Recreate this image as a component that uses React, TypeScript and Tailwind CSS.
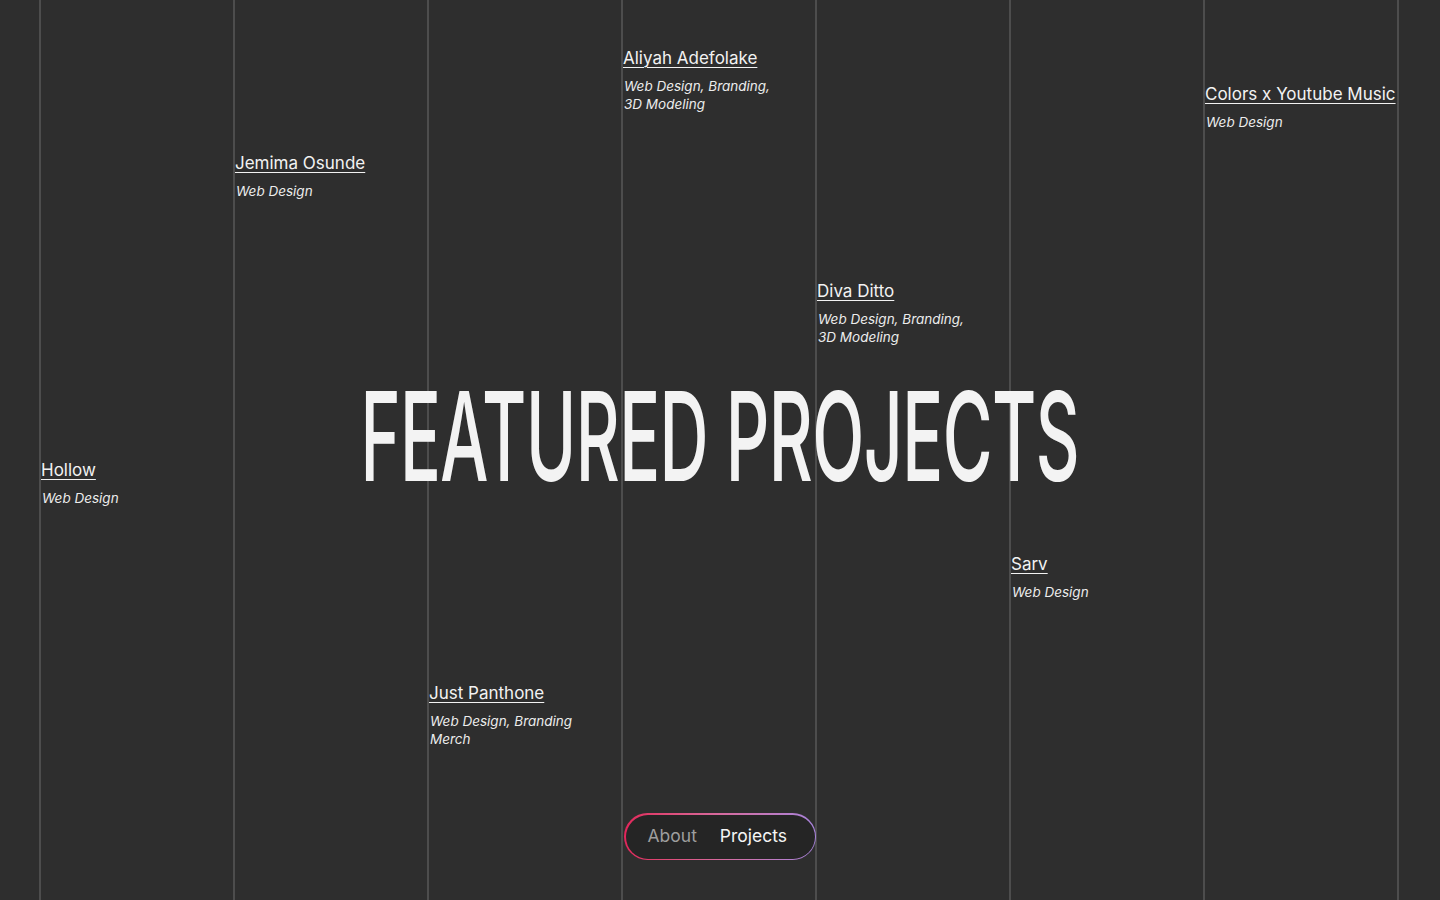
import React from 'react'

interface Project {
  name: string
  tags: string[]
  offset: string
}

const projects: Project[] = [
  { name: 'Hollow', tags: ['Web Design'], offset: 'pt-[458px]' },
  { name: 'Jemima Osunde', tags: ['Web Design'], offset: 'pt-[151px]' },
  { name: 'Just Panthone', tags: ['Web Design, Branding', 'Merch'], offset: 'pt-[681px]' },
  { name: 'Aliyah Adefolake', tags: ['Web Design, Branding,', '3D Modeling'], offset: 'pt-[46px]' },
  { name: 'Diva Ditto', tags: ['Web Design, Branding,', '3D Modeling'], offset: 'pt-[279px]' },
  { name: 'Sarv', tags: ['Web Design'], offset: 'pt-[552px]' },
  { name: 'Colors x Youtube Music', tags: ['Web Design'], offset: 'pt-[82px]' },
]

function ProjectColumn({ project, last }: { project: Project; last: boolean }) {
  return (
    <div className={`h-full border-l-2 border-[#4d4d4d] ${last ? 'border-r-2' : ''} ${project.offset}`}>
      <a href="#" className="block text-[17px] leading-[24px] text-[#f2f2f2] underline underline-offset-[3px] decoration-1 whitespace-nowrap">
        {project.name}
      </a>
      <p className="mt-[7px] pl-px text-[13.5px] leading-[18px] italic text-[#ececec]">
        {project.tags.map((t) => (
          <span key={t} className="block">{t}</span>
        ))}
      </p>
    </div>
  )
}

export default function App() {
  return (
    <div className="relative h-[900px] w-full overflow-hidden bg-[#2e2e2e] font-['Inter','Liberation_Sans',sans-serif]">
      <div className="grid h-full grid-cols-[repeat(6,194px)_196px] pl-[39px]">
        {projects.map((p, i) => (
          <ProjectColumn key={p.name} project={p} last={i === projects.length - 1} />
        ))}
      </div>

      {/* big title over the grid */}
      <div className="pointer-events-none absolute inset-x-0 top-[366px] flex justify-center">
        <h1 className="origin-center scale-x-[0.548] whitespace-nowrap text-[124px] font-medium leading-[140px] tracking-[-1px] text-[#f3f3f3]">
          FEATURED PROJECTS
        </h1>
      </div>

      {/* nav pill */}
      <div className="absolute left-[624px] top-[813px] rounded-full bg-gradient-to-r from-[#e2245a] via-[#d66a9e] to-[#a883dc] p-[1.5px]">
        <nav className="flex h-[44px] w-[189px] items-center gap-[23px] rounded-full bg-[#252525] pl-[22px] text-[17.5px]">
          <a href="#" className="text-[#9e9e9e]">About</a>
          <a href="#" className="text-[#f5f5f5]">Projects</a>
        </nav>
      </div>
    </div>
  )
}
